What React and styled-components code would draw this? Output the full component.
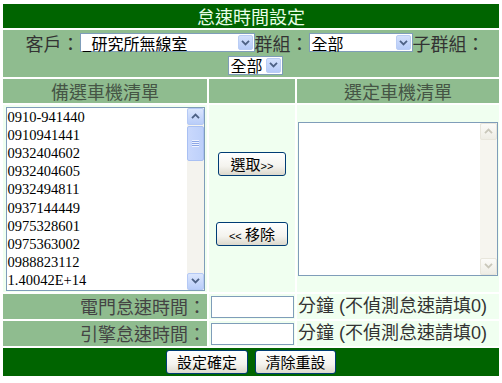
import styled, { createGlobalStyle } from "styled-components";

const GlobalStyle = createGlobalStyle`
  body {
    margin: 0;
    background: #ffffff;
    font-family: "Noto Sans CJK TC", sans-serif;
  }
`

const phones = [
  "0910-941440",
  "0910941441",
  "0932404602",
  "0932404605",
  "0932494811",
  "0937144449",
  "0975328601",
  "0975363002",
  "0988823112",
  "1.40042E+14",
]

const Chevron = ({ up, color = "#4d6185" }) => (
  <svg width="9" height="6" viewBox="0 0 9 6">
    <path
      d={up ? "M1 5.2 L4.5 1.6 L8 5.2" : "M1 0.8 L4.5 4.4 L8 0.8"}
      fill="none"
      stroke={color}
      strokeWidth="1.8"
    />
  </svg>
)

const FakeSelect = ({ width, value }) => (
  <SelectBox $width={width}>
    <SelectText>{value}</SelectText>
    <ArrowButton>
      <Chevron />
    </ArrowButton>
  </SelectBox>
)

const ListBox = ({ width, height, items, disabled }) => (
  <ListFrame $width={width} $height={height}>
    <ListItems>
      {items.map((item) => <ListItem key={item}>{item}</ListItem>)}
    </ListItems>
    <ScrollTrack $disabled={disabled}>
      <ScrollButton $disabled={disabled}>
        <Chevron up color={disabled ? "#c9c7ba" : "#4d6185"}/>
      </ScrollButton>
      {disabled ? <TrackFill/> : (
        <>
          <Thumb><Grip/></Thumb>
          <TrackFill/>
        </>
      )}
      <ScrollButton $disabled={disabled}>
        <Chevron color={disabled ? "#c9c7ba" : "#4d6185"}/>
      </ScrollButton>
    </ScrollTrack>
  </ListFrame>
)

export default function App() {
  return (
    <>
      <GlobalStyle/>
      <Page>
        <Title>怠速時間設定</Title>
        <FilterRow>
          <Label>客戶：</Label>
          <FakeSelect width={175} value="_研究所無線室"/>
          <Label>群組：</Label>
          <FakeSelect width={104} value="全部"/>
          <Label>子群組：</Label>
          <FakeSelect width={55} value="全部"/>
        </FilterRow>

        <Header>備選車機清單</Header>
        <Header/>
        <Header>選定車機清單</Header>

        <Cell>
          <ListBox width={199} height={184} items={phones}/>
        </Cell>
        <Cell $gap={46}>
          <XPButton $width={68}>選取<Small>&gt;&gt;</Small></XPButton>
          <XPButton $width={72}><Small>&lt;&lt;</Small> 移除</XPButton>
        </Cell>
        <Cell>
          <ListBox width={200} height={154} items={[]} disabled/>
        </Cell>

        <FieldLabel>電門怠速時間：</FieldLabel>
        <Cell><TextInput/></Cell>
        <Note>分鐘 (不偵測怠速請填0)</Note>

        <FieldLabel>引擎怠速時間：</FieldLabel>
        <Cell><TextInput/></Cell>
        <Note>分鐘 (不偵測怠速請填0)</Note>

        <Footer>
          <XPButton $width={82}>設定確定</XPButton>
          <XPButton $width={81}>清除重設</XPButton>
        </Footer>
      </Page>
    </>
  )
}

const Page = styled.div`
    width: 496px;
    padding: 4px 3px;
    display: grid;
    grid-template-columns: 204px 86px 202px;
    grid-template-rows: 24px 47px 24px 187px 25px 25px 28px;
    gap: 2px;
`

const Title = styled.div`
    grid-column: 1 / -1;
    background-color: #006400;
    color: #e8ffe8;
    font-size: 18px;
    line-height: 24px;
    text-align: center;
`

const FilterRow = styled.div`
    grid-column: 1 / -1;
    background-color: #8fbc8f;
    color: #333333;
    font-size: 18px;
    display: flex;
    flex-wrap: wrap;
    justify-content: center;
    align-content: center;
    align-items: center;
    row-gap: 3px;
    padding-left: 8px;
`

const Label = styled.span`
    line-height: 20px;
`

const SelectBox = styled.div`
    box-sizing: border-box;
    width: ${(props) => props.$width}px;
    height: 19px;
    border: 1px solid #7f9db9;
    background-color: #ffffff;
    display: flex;
    align-items: center;
    justify-content: space-between;
    padding: 1px;
`

const SelectText = styled.span`
    font-size: 16px;
    line-height: 16px;
    color: #000000;
    padding-left: 1px;
    white-space: nowrap;
`

const ArrowButton = styled.div`
    box-sizing: border-box;
    width: 15px;
    height: 15px;
    border: 1px solid #bacdf5;
    border-radius: 2px;
    background: linear-gradient(#d4e1fc, #b6cbf8);
    display: flex;
    align-items: center;
    justify-content: center;
`

const Header = styled.div`
    background-color: #8fbc8f;
    color: #455545;
    font-size: 18px;
    line-height: 24px;
    text-align: center;
`

const Cell = styled.div`
    background-color: #f0fff0;
    display: flex;
    flex-direction: column;
    align-items: center;
    justify-content: center;
    gap: ${(props) => props.$gap || 0}px;
`

const ListFrame = styled.div`
    box-sizing: border-box;
    width: ${(props) => props.$width}px;
    height: ${(props) => props.$height}px;
    border: 1px solid #7f9db9;
    background-color: #ffffff;
    display: flex;
`

const ListItems = styled.div`
    flex: 1;
    overflow: hidden;
    padding: 0 1px;
`

const ListItem = styled.div`
    font-family: "Liberation Serif", serif;
    font-size: 14.5px;
    line-height: 18.2px;
    color: #000000;
`

const ScrollTrack = styled.div`
    width: 17px;
    display: flex;
    flex-direction: column;
    background-color: ${(props) => (props.$disabled ? "#f6f5ef" : "#f4f3ee")};
`

const ScrollButton = styled.div`
    box-sizing: border-box;
    width: 17px;
    height: 17px;
    border: 1px solid ${(props) => (props.$disabled ? "#e8e6dc" : "#b5c9f5")};
    border-radius: 2px;
    background: ${(props) => (props.$disabled
      ? "linear-gradient(#fbfbf8, #eeede5)"
      : "linear-gradient(#dbe6fd, #b9cdf9)")};
    display: flex;
    align-items: center;
    justify-content: center;
`

const Thumb = styled.div`
    box-sizing: border-box;
    height: 35px;
    margin-top: 1px;
    border: 1px solid #a9c0f3;
    border-radius: 2px;
    background: linear-gradient(90deg, #c9d8fc, #bdd0fa);
    display: flex;
    align-items: center;
    justify-content: center;
`

const Grip = styled.div`
    width: 7px;
    height: 7px;
    background: repeating-linear-gradient(#eef3fe 0 1px, #8ca7e6 1px 2px);
`

const TrackFill = styled.div`
    flex: 1;
`

const XPButton = styled.div`
    box-sizing: border-box;
    width: ${(props) => props.$width}px;
    height: 24px;
    border: 1px solid #003c74;
    border-radius: 3px;
    background: linear-gradient(#ffffff 0%, #f4f3ee 60%, #dcd8cc 100%);
    color: #000000;
    font-size: 15px;
    line-height: 22px;
    text-align: center;
    white-space: nowrap;
`

const Small = styled.span`
    font-family: "Liberation Sans", sans-serif;
    font-size: 11px;
`

const FieldLabel = styled.div`
    background-color: #8fbc8f;
    color: #444444;
    font-size: 18px;
    line-height: 25px;
    text-align: right;
    padding-right: 1px;
`

const TextInput = styled.div`
    box-sizing: border-box;
    width: 83px;
    height: 22px;
    border: 1px solid #7f9db9;
    background-color: #ffffff;
`

const Note = styled.div`
    background-color: #f0fff0;
    color: #333333;
    font-family: "Liberation Sans", "Noto Sans CJK TC", sans-serif;
    font-size: 18px;
    line-height: 25px;
    padding-left: 1px;
    white-space: nowrap;
`

const Footer = styled.div`
    grid-column: 1 / -1;
    background-color: #006400;
    display: flex;
    align-items: center;
    justify-content: center;
    gap: 7px;
`
